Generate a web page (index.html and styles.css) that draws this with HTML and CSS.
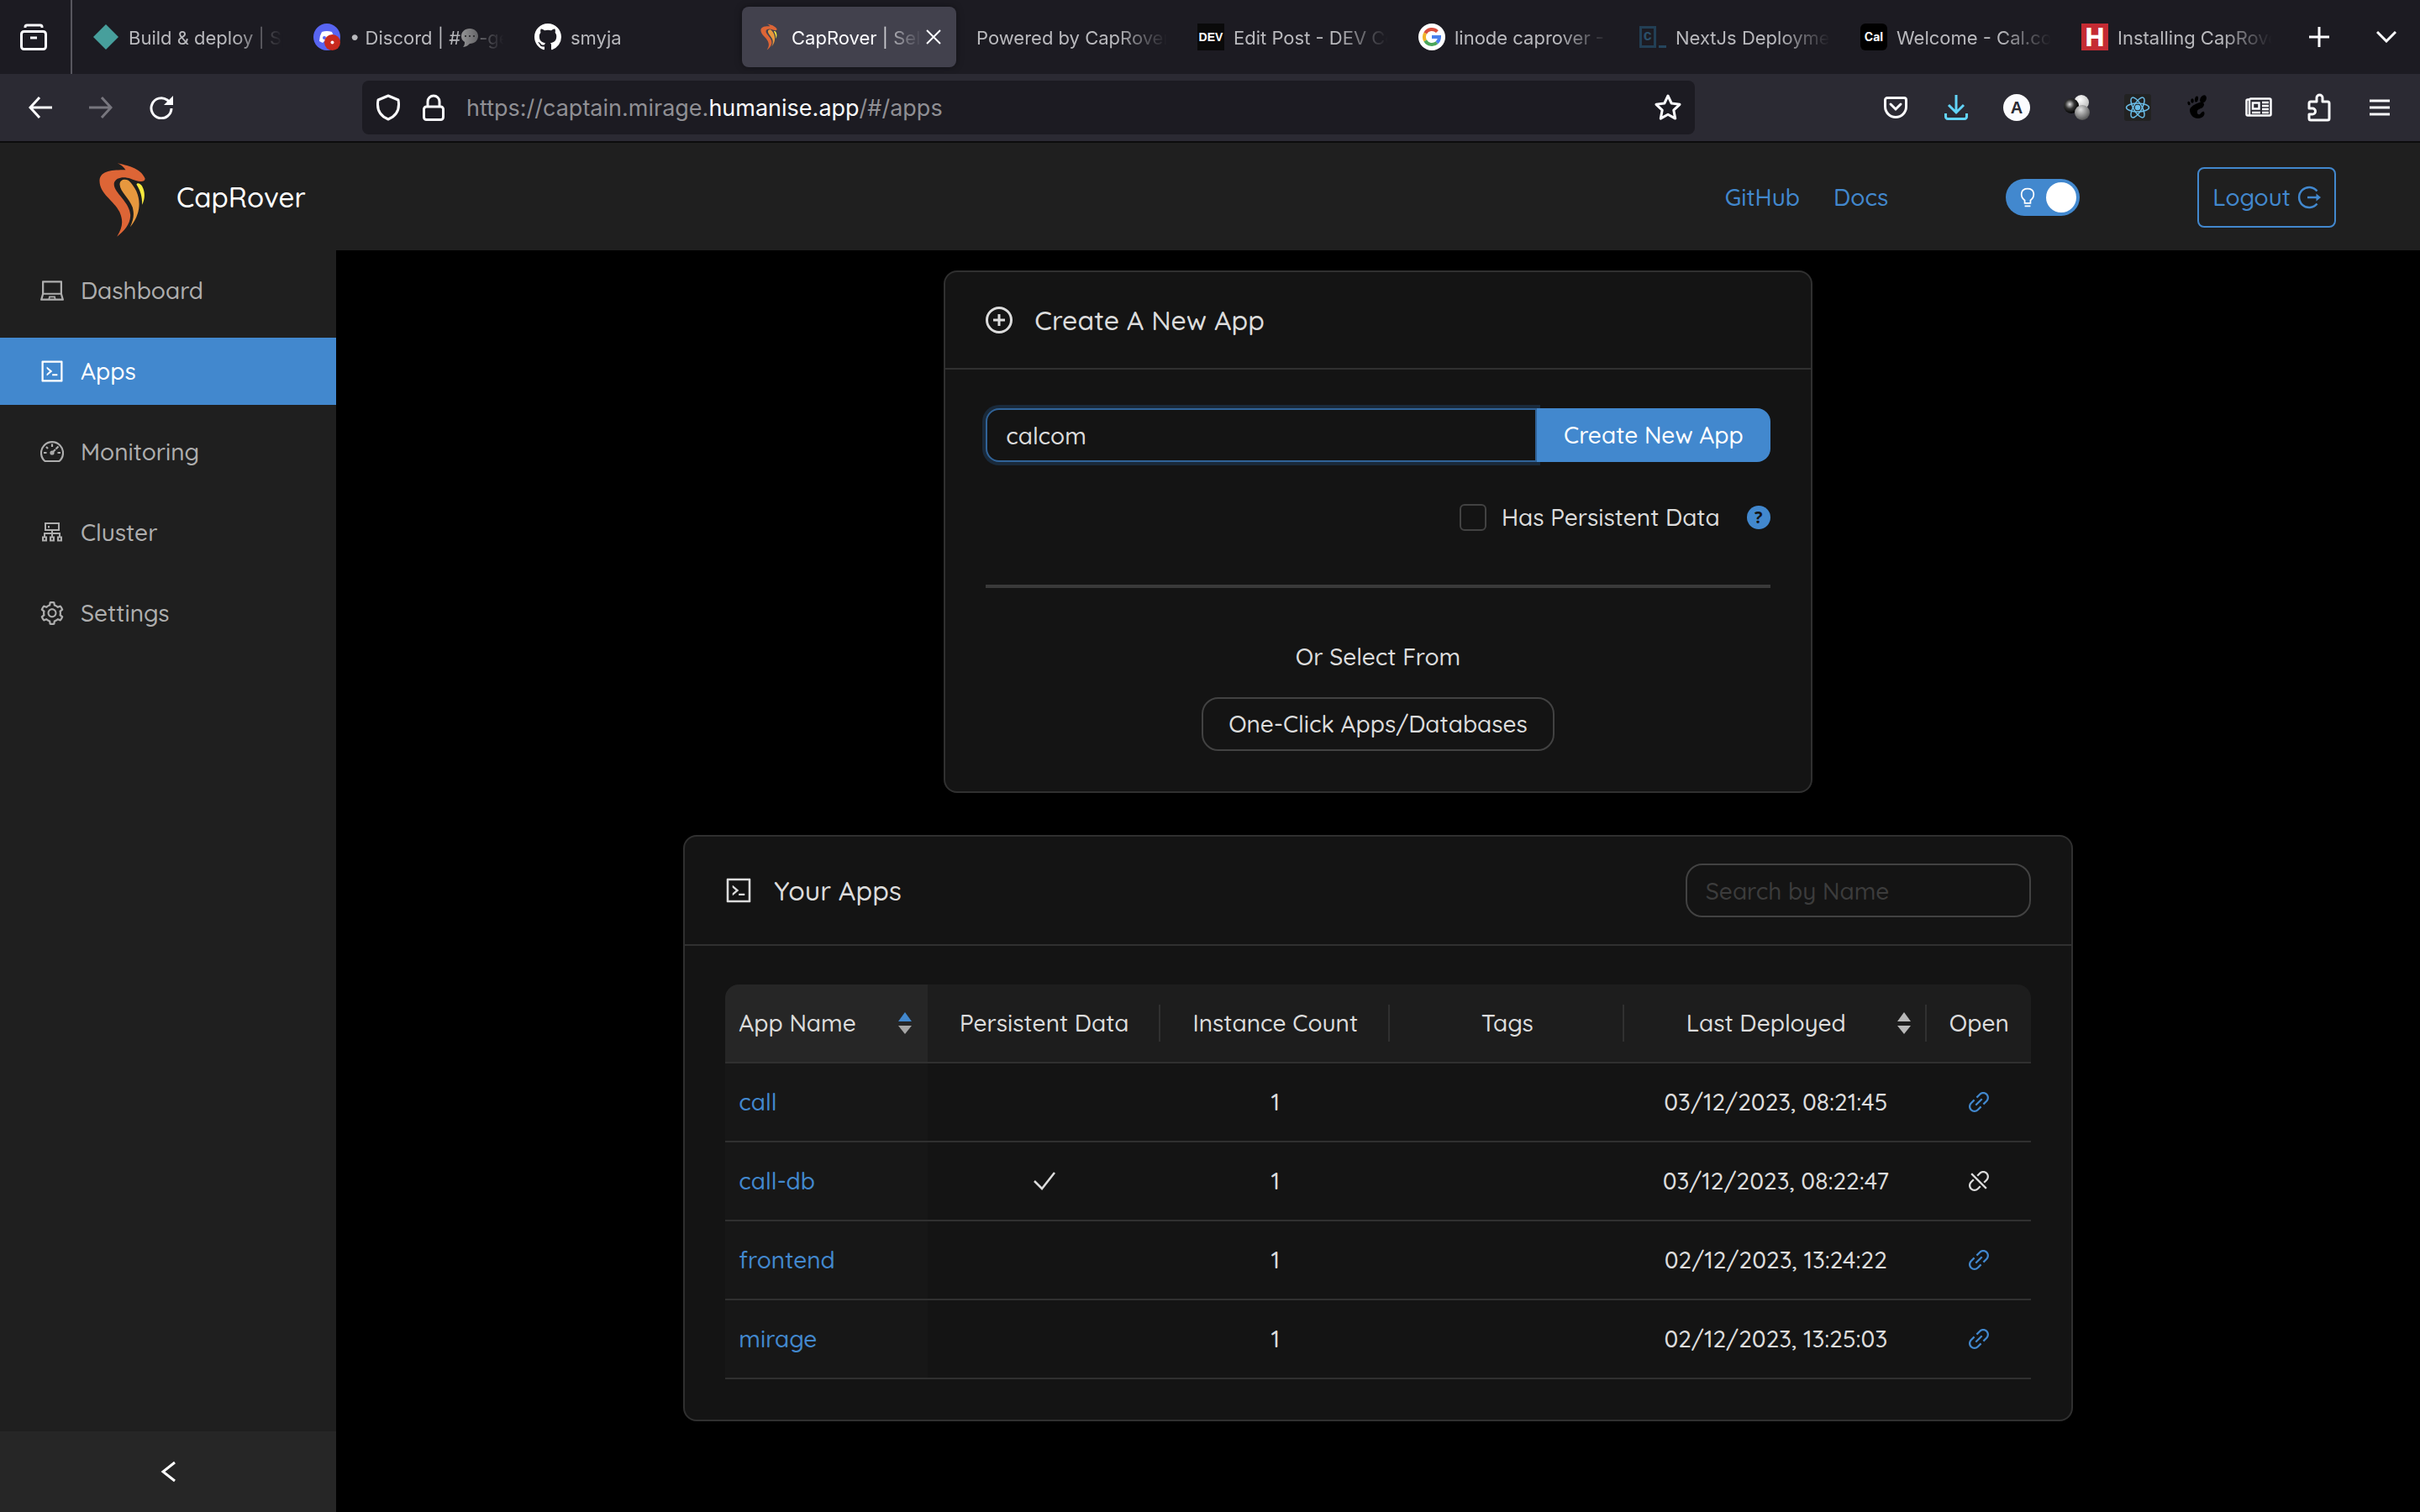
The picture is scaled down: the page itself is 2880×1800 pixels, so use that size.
FILE: index.html
```html
<!DOCTYPE html>
<html lang="en">
<head>
    <meta charset="UTF-8">
    <meta name="viewport" content="width=device-width, initial-scale=1.0">
    <title>CapRover | Self-hosted PaaS</title>
    <link rel="stylesheet" href="styles.css">
</head>
<body>
    <!-- shared icons -->
    <svg class="sprite" aria-hidden="true">
        <symbol id="caprover" viewBox="50 38 170 270">
            <path fill="#dd6536" d="M118 42C150 50 200 58 216 96C219 112 188 108 165 97C140 88 112 92 106 112C100 145 165 180 164 230C163 262 140 285 116 304C136 270 140 250 125 215C105 175 52 150 54 102C58 68 100 66 147 66C140 55 130 48 118 42Z"/>
            <path fill="#e7983e" d="M126 118C126 100 145 96 158 104C185 130 200 165 194 205C190 230 178 252 163 270C176 240 178 225 172 200C160 165 128 145 126 118Z"/>
            <path fill="#f6ea3e" d="M186 118C188 110 200 114 206 124C218 145 216 170 206 190C206 160 200 140 186 118Z"/>
        </symbol>
        <symbol id="code" viewBox="64 64 896 896">
            <path d="M516 673c0 4.4 3.4 8 7.5 8h185c4.1 0 7.5-3.6 7.5-8v-48c0-4.4-3.4-8-7.5-8h-185c-4.1 0-7.5 3.6-7.5 8v48zm-194.9 6.1l192-161c3.8-3.2 3.8-9.1 0-12.3l-192-160.9A7.95 7.95 0 00308 351v62.7c0 2.4 1 4.6 2.9 6.1L420.7 512l-109.8 92.2a8.1 8.1 0 00-2.9 6.1V673c0 6.8 7.9 10.5 13.1 6.1zM880 112H144c-17.7 0-32 14.3-32 32v736c0 17.7 14.3 32 32 32h736c17.7 0 32-14.3 32-32V144c0-17.7-14.3-32-32-32zm-40 728H184V184h656v656z"/>
        </symbol>
        <symbol id="link" viewBox="64 64 896 896">
            <path d="M574 665.4a8.03 8.03 0 00-11.3 0L446.5 781.6c-53.8 53.8-144.6 59.5-204 0-59.5-59.5-53.8-150.2 0-204l116.2-116.2c3.1-3.1 3.1-8.2 0-11.3l-39.8-39.8a8.03 8.03 0 00-11.3 0L191.4 526.5c-84.6 84.6-84.6 221.5 0 306s221.5 84.6 306 0l116.2-116.2c3.1-3.1 3.1-8.2 0-11.3L574 665.4zm258.6-474c-84.6-84.6-221.5-84.6-306 0L410.3 307.6a8.03 8.03 0 000 11.3l39.7 39.7c3.1 3.1 8.2 3.1 11.3 0l116.2-116.2c53.8-53.8 144.6-59.5 204 0 59.5 59.5 53.8 150.2 0 204L665.3 562.6a8.03 8.03 0 000 11.3l39.8 39.8c3.1 3.1 8.2 3.1 11.3 0l116.2-116.2c84.5-84.6 84.5-221.5 0-306.1zM610.1 372.3a8.03 8.03 0 00-11.3 0L372.3 598.7a8.03 8.03 0 000 11.3l39.6 39.6c3.1 3.1 8.2 3.1 11.3 0l226.4-226.4c3.1-3.1 3.1-8.2 0-11.3l-39.5-39.6z"/>
        </symbol>
        <symbol id="disconnect" viewBox="64 64 896 896">
            <path d="M832.6 191.4c-84.6-84.6-221.5-84.6-306 0l-96.9 96.9 51 51 96.9-96.9c53.8-53.8 144.6-59.5 204 0 59.5 59.5 53.8 150.2 0 204l-96.9 96.9 51.1 51.1 96.9-96.9c84.4-84.6 84.4-221.5-.1-306.1zM446.5 781.6c-53.8 53.8-144.6 59.5-204 0-59.5-59.5-53.8-150.2 0-204l96.9-96.9-51.1-51.1-96.9 96.9c-84.6 84.6-84.6 221.5 0 306s221.5 84.6 306 0l96.9-96.9-51-51-96.8 97zM260.3 209.4a8.03 8.03 0 00-11.3 0L209.4 249a8.03 8.03 0 000 11.3l554.4 554.4c3.1 3.1 8.2 3.1 11.3 0l39.6-39.6c3.1-3.1 3.1-8.2 0-11.3L260.3 209.4z"/>
        </symbol>
    </svg>

    <header class="tabbar">
        <button class="view-btn" aria-label="Firefox View">
            <svg width="32" height="32" viewBox="0 0 32 32" fill="none" stroke="#fbfbfe" stroke-width="3"><rect x="1.500" y="9.500" width="29" height="21" rx="3"/><path d="M6 5V4a2 2 0 0 1 2-2h16a2 2 0 0 1 2 2v1M12 17h8"/></svg>
        </button>
        <nav class="tabs">
            <div class="tab">
                <svg class="favicon" viewBox="0 0 32 32"><path fill="#479f9c" d="M16 1l15 15-15 15L1 16z"/></svg>
                <span class="tab-title">Build &amp; deploy | Space</span>
            </div>
            <div class="tab">
                <svg class="favicon" viewBox="0 0 32 32"><circle cx="16" cy="16" r="16" fill="#5865f2"/><path fill="#fff" d="M10 10q6-2 12 0 3 5 3 11l-4 2-2-2h-6l-2 2-4-2q0-6 3-11z"/><circle cx="13" cy="17" r="2" fill="#5865f2"/><circle cx="22.500" cy="22.500" r="9.500" fill="#c92a1e"/><circle cx="22.500" cy="22.500" r="2" fill="#fff"/></svg>
                <span class="tab-title">• Discord | #<svg class="bubble" viewBox="0 0 22 24"><path fill="#aaa" d="M11 1c6 0 10 4 10 9s-4 9-10 9c-1 1-4 4-8 4 2-2 2-4 2-6-3-2-4-4-4-7 0-5 4-9 10-9z"/><path stroke="#444" stroke-width="2" stroke-dasharray="2 3" d="M5 10h12"/></svg>-general</span>
            </div>
            <div class="tab">
                <svg class="favicon" viewBox="0 0 16 16"><path fill="#fff" d="M8 0C3.58 0 0 3.58 0 8c0 3.54 2.29 6.53 5.47 7.59.4.07.55-.17.55-.38 0-.19-.01-.82-.01-1.49-2.01.37-2.53-.49-2.69-.94-.09-.23-.48-.94-.82-1.13-.28-.15-.68-.52-.01-.53.63-.01 1.08.58 1.23.82.72 1.21 1.87.87 2.33.66.07-.52.28-.87.51-1.07-1.78-.2-3.64-.89-3.64-3.95 0-.87.31-1.59.82-2.15-.08-.2-.36-1.02.08-2.12 0 0 .67-.21 2.2.82.64-.18 1.32-.27 2-.27s1.36.09 2 .27c1.53-1.04 2.2-.82 2.2-.82.44 1.1.16 1.92.08 2.12.51.56.82 1.27.82 2.15 0 3.07-1.87 3.75-3.65 3.95.29.25.54.73.54 1.48 0 1.07-.01 1.93-.01 2.2 0 .21.15.46.55.38A8.01 8.01 0 0016 8c0-4.42-3.58-8-8-8z"/></svg>
                <span class="tab-title">smyja</span>
            </div>
            <div class="tab active">
                <svg class="favicon"><use href="#caprover"/></svg>
                <span class="tab-title">CapRover | Self-hosted</span>
                <button class="tab-close" aria-label="Close tab"><svg width="18" height="18" viewBox="0 0 18 18" stroke="#fbfbfe" stroke-width="2"><path d="M1 1l16 16M17 1L1 17"/></svg></button>
            </div>
            <div class="tab"><span class="tab-title">Powered by CapRover</span></div>
            <div class="tab">
                <span class="favicon fav-dev">DEV</span>
                <span class="tab-title">Edit Post - DEV Community</span>
            </div>
            <div class="tab">
                <svg class="favicon" viewBox="0 0 32 32" fill="none" stroke-width="4"><circle cx="16" cy="16" r="16" fill="#fff"/><path stroke="#d94f3d" d="M8.200 11.500A9 9 0 0 1 22.400 9.600"/><path stroke="#f0b429" d="M8.200 20.500a9 9 0 0 1 0-9"/><path stroke="#4ba65a" d="M22 22.700A9 9 0 0 1 8.200 20.500"/><path stroke="#4a80ec" d="M16 16h9a9 9 0 0 1-3 6.700"/></svg>
                <span class="tab-title">linode caprover - Google</span>
            </div>
            <div class="tab">
                <span class="favicon fav-next"><span>c</span></span>
                <span class="tab-title">NextJs Deployment</span>
            </div>
            <div class="tab">
                <span class="favicon fav-cal">Cal</span>
                <span class="tab-title">Welcome - Cal.com</span>
            </div>
            <div class="tab">
                <span class="favicon fav-h">H</span>
                <span class="tab-title">Installing CapRover</span>
            </div>
        </nav>
        <button class="tool" aria-label="New tab"><svg width="24" height="24" viewBox="0 0 24 24" stroke="#fbfbfe" stroke-width="3"><path d="M12 0v24M0 12h24"/></svg></button>
        <button class="tool" aria-label="List all tabs"><svg width="24" height="14" viewBox="0 0 24 14" fill="none" stroke="#fbfbfe" stroke-width="3"><path d="M1 1l11 11L23 1"/></svg></button>
    </header>

    <div class="toolbar">
        <button class="tool" aria-label="Back"><svg width="28" height="26" viewBox="0 0 28 26" fill="none" stroke="#fbfbfe" stroke-width="3"><path d="M13 1L2 13l11 12M2 13h26"/></svg></button>
        <button class="tool" aria-label="Forward"><svg width="28" height="26" viewBox="0 0 28 26" fill="none" stroke="#77767e" stroke-width="3"><path d="M15 1l11 12-11 12M26 13H0"/></svg></button>
        <button class="tool" aria-label="Reload"><svg width="28" height="28" viewBox="0 0 28 28" fill="none" stroke="#fbfbfe" stroke-width="3"><path d="M26 15A12 12 0 1 1 21 5l3 3"/><path fill="#fbfbfe" stroke="none" d="M28 0v11H17z"/></svg></button>
        <div class="urlbar">
            <svg width="30" height="32" viewBox="0 0 30 32" fill="none" stroke="#fbfbfe" stroke-width="3" stroke-linejoin="round"><path d="M15 2l12 5c2 11-2 19-12 23C5 26 1 18 3 7z"/></svg>
            <svg width="26" height="32" viewBox="0 0 26 32" fill="none" stroke="#fbfbfe" stroke-width="3"><rect x="1.500" y="15" width="23" height="15.500" rx="3"/><path d="M6 15V9a7 7 0 0 1 14 0v6"/></svg>
            <div class="url">https://captain.mirage.<b>humanise.app</b>/#/apps</div>
            <svg width="32" height="32" viewBox="0 0 32 32" fill="none" stroke="#fbfbfe" stroke-width="3" stroke-linejoin="round"><path d="M16 2l4.200 9 9.800 1.300-7.200 6.800 1.900 10L16 24.200l-8.700 4.900 1.900-10L2 12.300 11.800 11z"/></svg>
        </div>
        <div class="extensions">
            <button class="tool" aria-label="Pocket"><svg width="28" height="26" viewBox="0 0 28 26" fill="none" stroke="#fbfbfe" stroke-width="3" stroke-linecap="round"><path d="M4 1.500h20a2.500 2.500 0 0 1 2.500 2.500v8a12.500 12.500 0 0 1-25 0V4A2.500 2.500 0 0 1 4 1.500zM8 9l6 6 6-6"/></svg></button>
            <button class="tool" aria-label="Downloads"><svg width="28" height="30" viewBox="0 0 28 30" fill="none" stroke="#62d4f8" stroke-width="3"><path d="M14 0v21M5 12l9 9 9-9M1.500 22v4a2.500 2.500 0 0 0 2.500 2.500h20a2.500 2.500 0 0 0 2.500-2.500v-4"/></svg></button>
            <button class="tool"><span class="ext-a">A</span></button>
            <button class="tool" aria-label="Extension"><svg width="32" height="32" viewBox="0 0 32 32">
                <defs>
                    <radialGradient id="white" cx=".4" cy=".3" r=".7"><stop offset="0" stop-color="#fff"/><stop offset="1" stop-color="#bbb"/></radialGradient>
                    <radialGradient id="black" cx=".4" cy=".4" r=".6"><stop offset="0" stop-color="#ddd"/><stop offset=".5" stop-color="#333"/><stop offset="1" stop-color="#000"/></radialGradient>
                    <radialGradient id="grey" cx=".4" cy=".3" r=".7"><stop offset="0" stop-color="#ddd"/><stop offset="1" stop-color="#555"/></radialGradient>
                </defs>
                <circle cx="21" cy="10" r="9" fill="url(#white)"/><circle cx="9" cy="14" r="9" fill="url(#black)"/><circle cx="22" cy="22" r="9" fill="url(#grey)"/></svg></button>
            <button class="tool" aria-label="React Developer Tools"><svg width="32" height="32" viewBox="0 0 32 32" fill="none" stroke="#6bbde8" stroke-width="1.500"><rect width="32" height="32" rx="3" fill="#222222" stroke="none"/><circle cx="16" cy="16" r="2.500" fill="#6bbde8"/><ellipse cx="16" cy="16" rx="13.500" ry="5"/><ellipse cx="16" cy="16" rx="13.500" ry="5" transform="rotate(60 16 16)"/><ellipse cx="16" cy="16" rx="13.500" ry="5" transform="rotate(120 16 16)"/></svg></button>
            <button class="tool" aria-label="GNOME Shell integration"><svg width="26" height="30" viewBox="0 0 26 30" fill="#000"><path d="M12 10c6-3 10 0 7 4-2 3-6 2-7 5s1 5 3 4 2-4 5-3c2 4-2 8-7 8-7 0-10-6-10-10 0-3 4-6 9-8z"/><ellipse cx="19" cy="5" rx="3.500" ry="5" transform="rotate(28 19 5)"/><ellipse cx="11" cy="5" rx="2" ry="3.500" transform="rotate(10 11 5)"/><ellipse cx="6" cy="7" rx="1.800" ry="2.800"/><ellipse cx="2" cy="10" rx="1.500" ry="2.400" transform="rotate(-15 2 10)"/></svg></button>
            <button class="tool" aria-label="Reader"><svg width="32" height="24" viewBox="0 0 32 24" fill="none" stroke="#fbfbfe" stroke-width="2.500"><path d="M5 2v20M5 2.500H3A1.500 1.500 0 0 0 1.500 4v16A1.500 1.500 0 0 0 3 21.500h26a1.500 1.500 0 0 0 1.500-1.500V3A1.500 1.500 0 0 0 29 1.500H6.500A1.500 1.500 0 0 0 5 3M9 6.500h7.500v7H9zM20 6h8M20 10h8M20 14h8M8 18h10M20 18h8"/></svg></button>
            <button class="tool" aria-label="Extensions"><svg width="28" height="34" viewBox="0 0 28 34" fill="none" stroke="#fbfbfe" stroke-width="3" stroke-linejoin="round"><path d="M2 18v-6a2 2 0 0 1 2-2h7V5.500a3.500 3.500 0 0 1 7 0V10h6a2 2 0 0 1 2 2v18a2 2 0 0 1-2 2H4a2 2 0 0 1-2-2v-5h4a3.500 3.500 0 0 0 0-7z"/></svg></button>
            <button class="tool" aria-label="Menu"><svg width="24" height="20" viewBox="0 0 24 20" stroke="#fbfbfe" stroke-width="3"><path d="M0 2h24M0 10h24M0 18h24"/></svg></button>
        </div>
    </div>

    <div class="app-header">
        <svg class="logo"><use href="#caprover"/></svg>
        <div class="brand">CapRover</div>
        <nav class="header-links">
            <a href="#">GitHub</a>
            <a href="#">Docs</a>
        </nav>
        <label class="switch">
            <input type="checkbox" aria-label="Dark theme" checked>
            <svg viewBox="0 0 22 28" fill="none" stroke="#fff" stroke-width="2"><path d="M7 22v-4C0 13 1 2 11 2s11 11 4 16v4zM7 26h8"/></svg>
        </label>
        <button class="logout">Logout
            <svg width="28" height="28" viewBox="0 0 28 28" fill="none" stroke="#4288ce" stroke-width="2.500"><path d="M23.500 6.500a12 12 0 1 0 0 15M12 14h13"/><path fill="#4288ce" stroke="none" d="M22.500 9.500l5.500 4.500-5.500 4.500z"/></svg>
        </button>
    </div>

    <div class="layout">
        <aside class="sidebar">
            <nav class="menu">
                <a class="menu-item" href="#"><svg class="icon" viewBox="64 64 896 896"><path d="M956.9 845.1L896.4 632V168c0-17.700-14.300-32-32-32h-704c-17.700 0-32 14.300-32 32v464L67.900 845.1C60.400 866 75.800 888 98 888h828.800c22.200 0 37.600-22 30.100-42.900zM200.400 208h624v395h-624V208zm228.300 608l8.100-37h150.300l8.100 37H428.700zm224 0l-19.100-86.700c-.8-3.700-4.100-6.300-7.800-6.300H398.200c-3.800 0-7 2.600-7.800 6.300L371.300 816H151l42.300-149h638.200l42.300 149H652.700z"/></svg>Dashboard</a>
                <a class="menu-item selected" href="#"><svg class="icon"><use href="#code"/></svg>Apps</a>
                <a class="menu-item" href="#"><svg class="icon" viewBox="0 0 28 28" fill="none" stroke="currentColor" stroke-width="2.200"><path fill="none" d="M5.500 25a13 13 0 1 1 17 0zM14 4.500v3.500M4 15h3.500M20.500 15H24M7 8l2 2M18.500 10.500l3-3M14 15l4-4"/><circle cx="14" cy="15" r="1.500"/></svg>Monitoring</a>
                <a class="menu-item" href="#"><svg class="icon" viewBox="0 0 28 28" fill="none" stroke="currentColor" stroke-width="2"><path fill="none" d="M6 3h16v8H6zM14 11v8M5 19v-4h18v4M3 19.500h4v4H3zM12 19.500h4v4h-4zM21 19.500h4v4h-4zM10 6v2.500"/></svg>Cluster</a>
                <a class="menu-item" href="#"><svg class="icon" viewBox="64 64 896 896"><path d="M924.8 625.7l-65.500-56c3.100-19 4.700-38.400 4.700-57.800s-1.600-38.800-4.700-57.800l65.500-56a32.030 32.030 0 009.300-35.200l-.9-2.600a443.740 443.740 0 00-79.700-137.900l-1.800-2.100a32.120 32.120 0 00-35.100-9.500l-81.300 28.900c-30-24.600-63.500-44-99.700-57.600l-15.700-85a32.050 32.050 0 00-25.800-25.700l-2.700-.5c-52.100-9.400-106.900-9.400-159 0l-2.700.5a32.050 32.050 0 00-25.800 25.700l-15.800 85.400a351.860 351.860 0 00-99 57.400l-81.900-29.100a32 32 0 00-35.100 9.500l-1.800 2.100a446.020 446.020 0 00-79.700 137.900l-.9 2.600c-4.500 12.500-.8 26.500 9.300 35.200l66.300 56.600c-3.100 18.800-4.600 38-4.600 57.100 0 19.200 1.500 38.400 4.600 57.100L99 625.500a32.030 32.030 0 00-9.300 35.200l.9 2.600c18.100 50.400 44.900 96.900 79.700 137.900l1.800 2.100a32.120 32.120 0 0035.100 9.500l81.900-29.100c29.800 24.500 63.100 43.900 99 57.400l15.800 85.400a32.050 32.050 0 0025.800 25.700l2.700.5a449.400 449.400 0 00159 0l2.700-.5a32.050 32.050 0 0025.800-25.700l15.700-85a350 350 0 0099.700-57.600l81.300 28.900a32 32 0 0035.100-9.500l1.800-2.100c34.800-41.100 61.600-87.500 79.700-137.900l.9-2.600c4.500-12.300.8-26.300-9.300-35zM788.300 465.900c2.500 15.100 3.800 30.600 3.800 46.100s-1.300 31-3.800 46.100l-6.600 40.100 74.700 63.900a370.030 370.030 0 01-42.600 73.600L721 702.800l-31.400 25.800c-23.900 19.600-50.500 35-79.300 45.800l-38.100 14.300-17.900 97a377.500 377.500 0 01-85 0l-17.900-97.200-37.800-14.500c-28.500-10.800-55-26.200-78.700-45.700l-31.400-25.900-93.400 33.200c-17-22.900-31.200-47.600-42.600-73.600l75.500-64.500-6.500-40c-2.400-14.900-3.700-30.300-3.700-45.500 0-15.300 1.200-30.600 3.700-45.500l6.500-40-75.500-64.500c11.300-26.100 25.600-50.700 42.600-73.600l93.400 33.200 31.400-25.900c23.700-19.500 50.200-34.900 78.700-45.700l37.900-14.300 17.900-97.200c28.100-3.200 56.800-3.200 85 0l17.900 97 38.100 14.300c28.700 10.800 55.400 26.200 79.300 45.800l31.400 25.800 92.800-32.900c17 22.900 31.200 47.600 42.600 73.600L781.800 426l6.500 39.900zM512 326c-97.200 0-176 78.800-176 176s78.800 176 176 176 176-78.800 176-176-78.800-176-176-176zm79.200 255.200A111.600 111.600 0 01512 614c-29.900 0-58-11.700-79.200-32.800A111.600 111.600 0 01400 502c0-29.900 11.700-58 32.800-79.200C454 401.600 482.100 390 512 390c29.900 0 58 11.600 79.200 32.800A111.600 111.600 0 01624 502c0 29.900-11.700 58-32.800 79.200z"/></svg>Settings</a>
            </nav>
            <button class="collapse" aria-label="Collapse menu"><svg width="18" height="26" viewBox="0 0 18 26" fill="none" stroke="#fff" stroke-width="3"><path d="M17 2L3 13l14 11"/></svg></button>
        </aside>

        <main class="content">
            <section class="card create-card">
                <div class="card-head">
                    <h2><svg class="icon-lg" viewBox="0 0 32 32" fill="none" stroke="currentColor" stroke-width="3"><circle cx="16" cy="16" r="14.500"/><path d="M16 9v14M9 16h14"/></svg>Create A New App</h2>
                </div>
                <div class="card-body">
                    <form class="create-form">
                        <input type="text" class="app-input" aria-label="App name" value="calcom">
                        <button type="button" class="create-btn">Create New App</button>
                    </form>
                    <div class="persistent">
                        <label><input type="checkbox">Has Persistent Data</label>
                        <button class="help">?</button>
                    </div>
                    <hr>
                    <p class="or">Or Select From</p>
                    <button class="oneclick">One-Click Apps/Databases</button>
                </div>
            </section>

            <section class="card apps-card">
                <div class="card-head">
                    <h2><svg class="icon-lg"><use href="#code"/></svg>Your Apps</h2>
                    <input type="text" class="search" aria-label="Search by Name" placeholder="Search by Name">
                </div>
                <div class="card-body">
                    <table>
                        <colgroup>
                            <col class="c-name"><col class="c-data"><col class="c-count"><col class="c-tags"><col class="c-date"><col class="c-open">
                        </colgroup>
                        <thead>
                            <tr>
                                <th class="name"><div class="sortable">App Name<svg class="sorter" viewBox="0 0 16 26"><path fill="#4288ce" d="M8 0l8 11H0z"/><path fill="#a6a6a6" d="M0 16h16L8 26z"/></svg></div></th>
                                <th class="split">Persistent Data</th>
                                <th class="split">Instance Count</th>
                                <th class="split">Tags</th>
                                <th class="split"><div class="sortable"><span class="grow">Last Deployed</span><svg class="sorter" viewBox="0 0 16 26"><path fill="#b8b8b8" d="M8 0l8 11H0zM0 16h16L8 26z"/></svg></div></th>
                                <th>Open</th>
                            </tr>
                        </thead>
                        <tbody>
                            <tr>
                                <td class="name"><a href="#">call</a></td><td></td><td>1</td><td></td><td>03/12/2023, 08:21:45</td>
                                <td><a href="#" aria-label="Open call"><svg class="icon"><use href="#link"/></svg></a></td>
                            </tr>
                            <tr>
                                <td class="name"><a href="#">call-db</a></td>
                                <td><svg class="icon" viewBox="0 0 28 28"><path fill="none" stroke="currentColor" stroke-width="2.500" d="M2 14l9 9L26 4"/></svg></td>
                                <td>1</td><td></td><td>03/12/2023, 08:22:47</td>
                                <td><svg class="icon"><use href="#disconnect"/></svg></td>
                            </tr>
                            <tr>
                                <td class="name"><a href="#">frontend</a></td><td></td><td>1</td><td></td><td>02/12/2023, 13:24:22</td>
                                <td><a href="#" aria-label="Open frontend"><svg class="icon"><use href="#link"/></svg></a></td>
                            </tr>
                            <tr>
                                <td class="name"><a href="#">mirage</a></td><td></td><td>1</td><td></td><td>02/12/2023, 13:25:03</td>
                                <td><a href="#" aria-label="Open mirage"><svg class="icon"><use href="#link"/></svg></a></td>
                            </tr>
                        </tbody>
                    </table>
                </div>
            </section>
        </main>
    </div>
</body>
</html>
```
FILE: styles.css
```css
* { box-sizing: border-box; }
body { margin: 0; min-height: 100vh; display: flex; flex-direction: column; background: #000; color: #dcdcdc; font: 500 28px/44px Quicksand, "Open Sans", sans-serif; }
button, input { font: inherit; color: inherit; margin: 0; }
button { cursor: pointer; background: none; border: none; padding: 0; }
a { color: #4288ce; text-decoration: none; }
svg { flex: none; }
.sprite { position: absolute; width: 0; height: 0; }
.icon { width: 28px; height: 28px; fill: currentColor; display: block; }
.icon-lg { width: 32px; height: 32px; fill: currentColor; }
svg[fill="none"].icon, svg[fill="none"].icon-lg { fill: none; }

/* browser tabs */
.tabbar { height: 88px; display: flex; align-items: center; background: #1c1b22; font: 22px/32px Inter, sans-serif; color: #b9b9bd; }
.view-btn { width: 86px; height: 88px; padding-right: 4px; border-right: 2px solid #57565e; display: flex; align-items: center; justify-content: center; }
.tabs { flex: 1; min-width: 0; display: flex; gap: 8px; margin: 0 8px; }
.tab { flex: 1 1 0; min-width: 0; height: 72px; display: flex; align-items: center; gap: 11px; padding: 0 12px 0 16px; border-radius: 8px; }
.tab.active { background: #42414d; color: #fbfbfe; box-shadow: 0 0 8px rgba(0,0,0,0.4); }
.favicon { flex: none; width: 32px; height: 32px; display: flex; align-items: center; justify-content: center; }
.tab-title { flex: 1; min-width: 0; padding-top: 2px; overflow: hidden; white-space: nowrap; -webkit-mask-image: linear-gradient(to left, transparent, #000 60px); mask-image: linear-gradient(to left, transparent, #000 60px); }
.bubble { width: 22px; height: 24px; vertical-align: -4px; }
.tab-close { width: 30px; height: 32px; display: flex; align-items: center; justify-content: center; margin-left: -12px; }
.fav-dev { background: #0a0a0a; color: #fff; font: bold 14px/32px "Liberation Sans", sans-serif; }
.fav-cal { background: #000; color: #fff; border-radius: 6px; font-size: 14px; font-weight: 700; }
.fav-h { background: #c52b33; color: #fff; font-size: 30px; font-weight: 800; }
.fav-next { align-items: flex-end; justify-content: flex-start; gap: 3px; padding-bottom: 3px; }
.fav-next span { width: 20px; height: 26px; border: 3px solid #223f55; color: #2a4f6a; font: bold 18px/18px "Liberation Mono", monospace; text-align: center; }
.fav-next::after { content: ""; width: 9px; height: 3px; background: #25465e; }
.tool { width: 72px; height: 64px; display: flex; align-items: center; justify-content: center; }
.tabbar .tool + .tool { margin: 0 4px 0 8px; }

/* browser toolbar */
.toolbar { height: 82px; display: flex; align-items: center; padding: 0 12px; background: #2b2a33; border-bottom: 2px solid #0c0c0d; }
.urlbar { flex: 1; height: 64px; margin: 0 203px; padding: 0 16px; display: flex; align-items: center; gap: 26px; background: #1c1b22; border-radius: 8px; }
.url { flex: 1; padding-top: 2px; font: 27px/40px Inter, sans-serif; color: #8f8f94; white-space: nowrap; overflow: hidden; }
.url b { font-weight: 400; color: #fbfbfe; }
.extensions { display: flex; }
.ext-a { width: 32px; height: 32px; border-radius: 50%; background: #fbfbfe; color: #2b2a33; font: bold 20px/32px "Liberation Sans", sans-serif; }

/* app header */
.app-header { height: 128px; display: flex; align-items: center; padding: 2px 100px 0 117px; background: #1f1f1f; }
.logo { width: 57px; height: 90px; margin-top: 6px; }
.brand { flex: 1; margin-left: 36px; font-size: 33px; color: #fff; }
.header-links { display: flex; gap: 40px; }
.switch { position: relative; margin: 0 140px; height: 44px; }
.switch input { appearance: none; display: block; width: 88px; height: 44px; padding: 4px; border-radius: 22px; background: #4288ce; }
.switch input::before { content: ""; display: block; width: 36px; height: 36px; margin-left: auto; border-radius: 50%; background: #fff; }
.switch svg { position: absolute; left: 16px; top: 10px; width: 20px; height: 24px; }
.logout { height: 72px; padding: 0 16px; display: flex; align-items: center; gap: 8px; border: 2px solid #4288ce; border-radius: 8px; color: #4288ce; }

/* sidebar */
.layout { flex: 1; display: flex; }
.sidebar { flex: none; width: 400px; display: flex; flex-direction: column; justify-content: space-between; background: #1f1f1f; }
.menu { display: flex; flex-direction: column; gap: 16px; padding-top: 8px; }
.menu-item { height: 80px; padding-left: 48px; display: flex; align-items: center; gap: 20px; color: #aeaeae; }
.menu-item.selected { background: #4288ce; color: #fff; }
.collapse { height: 96px; display: flex; align-items: center; justify-content: center; background: #262626; }

/* cards */
.content { flex: 1; min-width: 0; display: flex; flex-direction: column; align-items: center; gap: 50px; padding-top: 24px; }
.card { background: #141414; border: 2px solid #303030; border-radius: 16px; }
.create-card { width: 41.67%; }
.apps-card { width: 66.67%; }
.card-head { min-height: 116px; padding: 0 48px; display: flex; align-items: center; justify-content: space-between; border-bottom: 2px solid #303030; }
.apps-card .card-head { min-height: 130px; }
.card-head h2 { margin: 0; font-size: 32px; font-weight: 500; display: flex; align-items: center; gap: 26px; }
.card-body { padding: 46px 48px 48px; }
.create-form { display: flex; }
.app-input { flex: 1; min-width: 0; height: 64px; padding: 0 22px; background: #141414; border: 2px solid #306398; border-radius: 16px 0 0 16px; outline: none; box-shadow: 0 0 0 4px #1a2a3b; }
.create-btn { position: relative; height: 64px; padding: 0 32px; background: #4288ce; color: #fff; border-radius: 0 16px 16px 0; }
.persistent { display: flex; align-items: center; justify-content: flex-end; gap: 32px; height: 32px; margin-top: 50px; }
.persistent label { display: flex; align-items: center; gap: 18px; }
.persistent input { appearance: none; width: 32px; height: 32px; border: 2px solid #424242; border-radius: 6px; }
.help { width: 28px; height: 28px; border-radius: 50%; background: #4288ce; color: #141414; font: bold 20px/28px "Open Sans", sans-serif; }
hr { height: 4px; margin: 64px 0 60px; border: none; background: #3a3a3a; }
.or { margin: 0 0 26px; text-align: center; }
.oneclick { display: block; height: 64px; margin: 0 auto; padding: 0 30px; border: 2px solid #424242; border-radius: 20px; }
.search { width: 411px; height: 64px; padding: 0 22px; background: #141414; border: 2px solid #424242; border-radius: 20px; }
.search::placeholder { color: #3c3c3c; }

/* apps table */
table { width: 100%; table-layout: fixed; border-collapse: separate; border-spacing: 0; }
.c-name { width: 241px; }
.c-data { width: 277px; }
.c-count { width: 273px; }
.c-tags { width: 279px; }
.c-date { width: 360px; }
.c-open { width: 124px; }
th, td { height: 94px; padding: 0 16px; border-bottom: 2px solid #303030; text-align: center; font-weight: 500; white-space: nowrap; }
th { position: relative; background: #1d1d1d; }
th.name { background: #262626; border-top-left-radius: 16px; }
th:last-child { border-top-right-radius: 16px; }
.split::after { content: ""; position: absolute; right: 0; top: 24px; width: 2px; height: 44px; background: #303030; }
.name { text-align: left; }
td.name { background: #171717; }
td .icon { margin: 0 auto; }
.sortable { display: flex; align-items: center; justify-content: space-between; }
.grow { flex: 1; }
.sorter { width: 16px; height: 26px; margin-right: 3px; }
th.split .sorter { margin-left: 4px; }
```
